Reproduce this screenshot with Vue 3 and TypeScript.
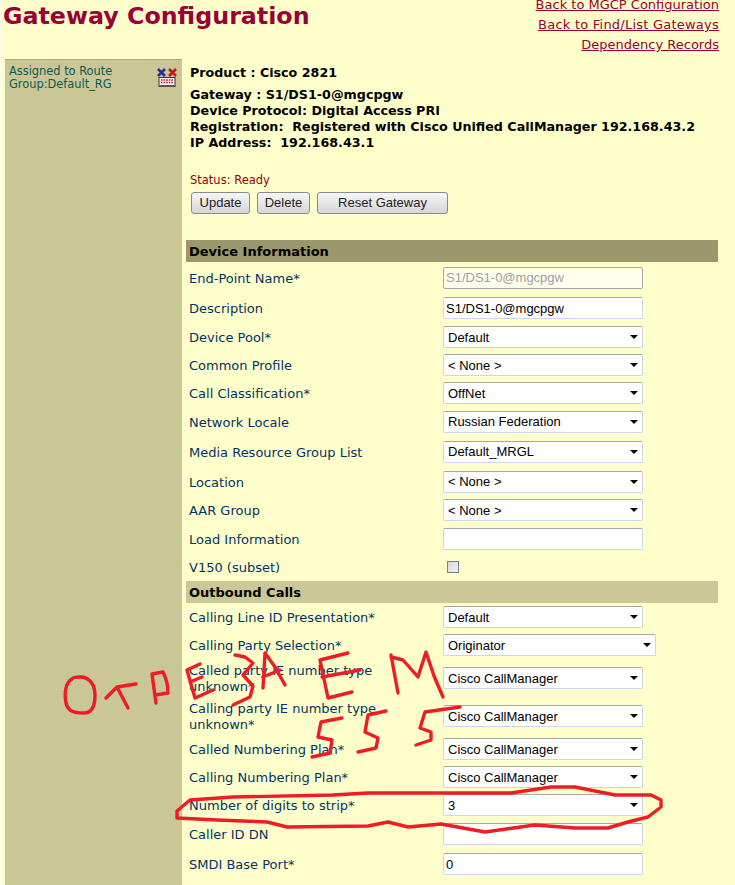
<script setup lang="ts">
interface Row {
  label: string
  kind: 'text' | 'select' | 'check'
  value?: string
  height: number
  wide?: boolean
  disabled?: boolean
}

const links: string[] = ['Back to MGCP Configuration', 'Back to Find/List Gateways', 'Dependency Records']

const deviceRows: Row[] = [
  { label: 'End-Point Name*', kind: 'text', value: 'S1/DS1-0@mgcpgw', height: 31, disabled: true },
  { label: 'Description', kind: 'text', value: 'S1/DS1-0@mgcpgw', height: 30 },
  { label: 'Device Pool*', kind: 'select', value: 'Default', height: 28 },
  { label: 'Common Profile', kind: 'select', value: '< None >', height: 28 },
  { label: 'Call Classification*', kind: 'select', value: 'OffNet', height: 28 },
  { label: 'Network Locale', kind: 'select', value: 'Russian Federation', height: 29 },
  { label: 'Media Resource Group List', kind: 'select', value: 'Default_MRGL', height: 31 },
  { label: 'Location', kind: 'select', value: '< None >', height: 29 },
  { label: 'AAR Group', kind: 'select', value: '< None >', height: 28 },
  { label: 'Load Information', kind: 'text', value: '', height: 29 },
  { label: 'V150 (subset)', kind: 'check', height: 28 },
]

const outboundRows: Row[] = [
  { label: 'Calling Line ID Presentation*', kind: 'select', value: 'Default', height: 28 },
  { label: 'Calling Party Selection*', kind: 'select', value: 'Originator', height: 28, wide: true },
  { label: 'Called party IE number type unknown*', kind: 'select', value: 'Cisco CallManager', height: 38 },
  { label: 'Calling party IE number type unknown*', kind: 'select', value: 'Cisco CallManager', height: 38 },
  { label: 'Called Numbering Plan*', kind: 'select', value: 'Cisco CallManager', height: 28 },
  { label: 'Calling Numbering Plan*', kind: 'select', value: 'Cisco CallManager', height: 28 },
  { label: 'Number of digits to strip*', kind: 'select', value: '3', height: 28 },
  { label: 'Caller ID DN', kind: 'text', value: '', height: 30 },
  { label: 'SMDI Base Port*', kind: 'text', value: '0', height: 30 },
]

const sections = [
  { title: 'Device Information', dark: true, rows: deviceRows },
  { title: 'Outbound Calls', dark: false, rows: outboundRows },
]

const strokes: string[] = [
  'M72 679 C66 682 64 692 66 703 C68 711 73 713 84 713 C92 713 95 706 95 695 C95 684 89 677 80 677 C76 677 73 677 72 679',
  'M106 698 L117 687 L136 684 M117 687 L128 708',
  'M156 703 L152 674 L163 672 C167 680 168 688 168 693 L155 695',
  'M200 664 L187 670 L195 698 L213 690 M190 682 L202 677',
  'M235 655 L245 657 L253 663 L243 675 L253 686 L250 697 L233 705',
  'M263 688 L265 653 L275 667 L285 685 M263 677 L280 670',
  'M348 653 L320 660 L328 698 L352 692 M322 677 L360 670',
  'M391 655 L398 693 M391 657 L403 660 L418 677 L426 652 L434 676 L443 697',
  'M342 718 L321 722 L318 737 L332 740 L330 753 L312 757',
  'M386 711 L368 715 L365 732 L378 738 L376 748 L358 752',
  'M460 707 L425 712 L420 728 L431 732 L431 740 L416 745',
  'M177 811 L190 800 L233 797 L333 795 L368 793 L441 793 L511 793 L551 787 L575 787 L615 795 L651 795 L661 800 L661 807 L648 817 L628 822 L608 828 L575 828 L535 825 L485 832 L441 824 L408 827 L388 822 L368 826 L287 827 L267 822 L217 820 L177 818 Z',
]
</script>

<template>
  <div class="page">
    <header class="top">
      <h1 class="title">Gateway Configuration</h1>
      <nav class="links">
        <a v-for="link in links" :key="link" href="#" class="link">{{ link }}</a>
      </nav>
    </header>

    <div class="body">
      <aside class="side">
        <p class="side-text">Assigned to Route Group:Default_RG</p>
        <svg class="gw-icon" width="20" height="20" viewBox="0 0 20 20" aria-hidden="true">
          <path d="M1 1 L8 8 M8 1 L1 8" stroke="#2a2a9c" stroke-width="2.6" fill="none" />
          <path d="M12 1 L19 8 M19 1 L12 8" stroke="#c01818" stroke-width="2.6" fill="none" />
          <rect x="2" y="9.5" width="16" height="9" fill="#f4f4ee" stroke="#333" />
          <rect x="2.5" y="17" width="15" height="2" fill="#555" />
          <path d="M4 12 H16 M4 14.5 H16" stroke="#b02020" stroke-width="1.4" stroke-dasharray="1.6 1" fill="none" />
        </svg>
      </aside>

      <main class="main">
        <section class="summary">
          <p class="product">Product : Cisco 2821</p>
          <p class="line">Gateway : S1/DS1-0@mgcpgw</p>
          <p class="line">Device Protocol: Digital Access PRI</p>
          <p class="line">Registration:&nbsp; Registered with Cisco Unified CallManager 192.168.43.2</p>
          <p class="line">IP Address:&nbsp; 192.168.43.1</p>
          <p class="status">Status: Ready</p>
          <div class="buttons">
            <button class="btn btn-update" type="button">Update</button>
            <button class="btn btn-delete" type="button">Delete</button>
            <button class="btn btn-reset" type="button">Reset Gateway</button>
          </div>
        </section>

        <section v-for="section in sections" :key="section.title" class="section">
          <h2 class="bar" :class="{ dark: section.dark }">{{ section.title }}</h2>
          <div
            v-for="row in section.rows"
            :key="row.label"
            class="row"
            :style="{ height: row.height + 'px' }"
          >
            <label class="label">{{ row.label }}</label>
            <div class="control">
              <input
                v-if="row.kind === 'text'"
                class="field"
                :class="{ disabled: row.disabled }"
                type="text"
                :value="row.value"
                :disabled="row.disabled"
              />
              <div v-else-if="row.kind === 'select'" class="select-wrap" :class="{ wide: row.wide }">
                <select class="field select">
                  <option>{{ row.value }}</option>
                </select>
              </div>
              <input v-else class="check" type="checkbox" disabled />
            </div>
          </div>
        </section>
      </main>
    </div>

    <svg class="ink" width="735" height="885" viewBox="0 0 735 885" aria-hidden="true">
      <path
        v-for="(d, i) in strokes"
        :key="i"
        :d="d"
        fill="none"
        stroke="#ee1c24"
        stroke-width="3.4"
        stroke-linecap="round"
        stroke-linejoin="round"
      />
    </svg>
  </div>
</template>

<style>
html,
body {
  margin: 0;
  background: #ffffcc;
}
</style>

<style scoped>
.page {
  position: relative;
  width: 735px;
  height: 885px;
  overflow: hidden;
  box-sizing: border-box;
  border-left: 2px solid #fdfdf0;
  background: #ffffcc;
  font-family: "DejaVu Sans", Verdana, sans-serif;
}
.top {
  display: flex;
  justify-content: space-between;
  height: 59px;
  box-sizing: border-box;
  padding-left: 1px;
  padding-right: 16px;
}
.title {
  margin: 0;
  font-size: 23.75px;
  line-height: 33px;
  font-weight: 700;
  color: #990033;
}
.links {
  display: flex;
  flex-direction: column;
  align-items: flex-end;
  gap: 4px;
  margin-top: -3px;
}
.link {
  font-size: 13px;
  line-height: 16px;
  color: #990033;
  text-decoration: underline;
}
.link:nth-child(2) {
  letter-spacing: 0.23px;
}
.body {
  display: flex;
  padding-left: 3px;
  height: 826px;
}
.side {
  position: relative;
  flex: none;
  width: 177px;
  box-sizing: border-box;
  padding: 5px 4px;
  border-top: 1px solid #a9a97c;
  background-color: #c9c995;
  background-image: radial-gradient(circle at 1px 1px, #d2b8a2 0.5px, transparent 0.8px);
  background-size: 3px 3px;
}
.side-text {
  margin: 0;
  width: 122px;
  font-size: 11.4px;
  line-height: 13px;
  color: #0b5a50;
}
.gw-icon {
  position: absolute;
  top: 8px;
  right: 5px;
}
.main {
  flex: none;
  width: 532px;
  margin-left: 4px;
}
.summary {
  height: 181px;
  box-sizing: border-box;
  padding: 6px 0 0 4px;
  color: #000;
  font-size: 12.7px;
  font-weight: 700;
}
.product {
  margin: 0 0 6px;
  line-height: 16px;
}
.line {
  margin: 0;
  line-height: 16px;
}
.status {
  margin: 21px 0 0;
  font-size: 11.5px;
  font-weight: 400;
  line-height: 16px;
  color: #990000;
}
.buttons {
  display: flex;
  gap: 7px;
  margin-top: 4px;
  padding-left: 1px;
}
.btn {
  height: 22px;
  padding: 0 0 2px;
  box-sizing: border-box;
  border: 1px solid #8a8a8a;
  border-radius: 3px;
  background: linear-gradient(#f6f6f6, #d6d6d6);
  font-family: "Liberation Sans", Arial, sans-serif;
  font-size: 13px;
  color: #222;
}
.btn-update {
  width: 59px;
}
.btn-delete {
  width: 53px;
}
.btn-reset {
  width: 131px;
}
.bar {
  display: flex;
  align-items: center;
  height: 22px;
  margin: 0;
  padding-left: 3px;
  font-size: 13px;
  font-weight: 700;
  color: #000;
  background-color: #c9c995;
  background-image: radial-gradient(circle at 1px 1px, #d6c0a0 0.5px, transparent 0.8px);
  background-size: 3px 3px;
}
.bar.dark {
  background-color: #98986a;
  background-image: radial-gradient(circle at 1px 1px, #a79a78 0.5px, transparent 0.8px);
}
.row {
  display: grid;
  grid-template-columns: 257px 1fr;
  align-items: center;
}
.label {
  padding: 2px 50px 0 3px;
  font-size: 13px;
  line-height: 16px;
  color: #003366;
}
.control {
  display: flex;
  align-items: center;
}
.field {
  display: block;
  width: 200px;
  height: 22px;
  margin: 0;
  padding: 0 2px;
  box-sizing: border-box;
  border: 1px solid #cbd6ea;
  border-top-color: #a3a8ad;
  border-radius: 2px;
  background: #fff;
  font-family: "Liberation Sans", Arial, sans-serif;
  font-size: 13px;
  color: #000;
  outline: none;
}
.field.disabled {
  border-color: #a3a8ad;
  background: #ffffee;
  color: #a0a0a0;
}
.select-wrap {
  position: relative;
  width: 200px;
}
.select-wrap.wide {
  width: 213px;
}
.select-wrap::after {
  content: "";
  position: absolute;
  top: 9px;
  right: 5px;
  border-style: solid;
  border-width: 4px 4px 0;
  border-color: #000 transparent transparent;
  pointer-events: none;
}
.select {
  width: 100%;
  padding: 0 16px 0 4px;
  appearance: none;
}
.check {
  width: 12px;
  height: 12px;
  margin: 0 0 0 4px;
  appearance: none;
  border: 1px solid #7a7f85;
  background: linear-gradient(135deg, #d8d8d8, #f2f2f2);
}
.ink {
  position: absolute;
  top: 0;
  left: -2px;
  pointer-events: none;
}
</style>
